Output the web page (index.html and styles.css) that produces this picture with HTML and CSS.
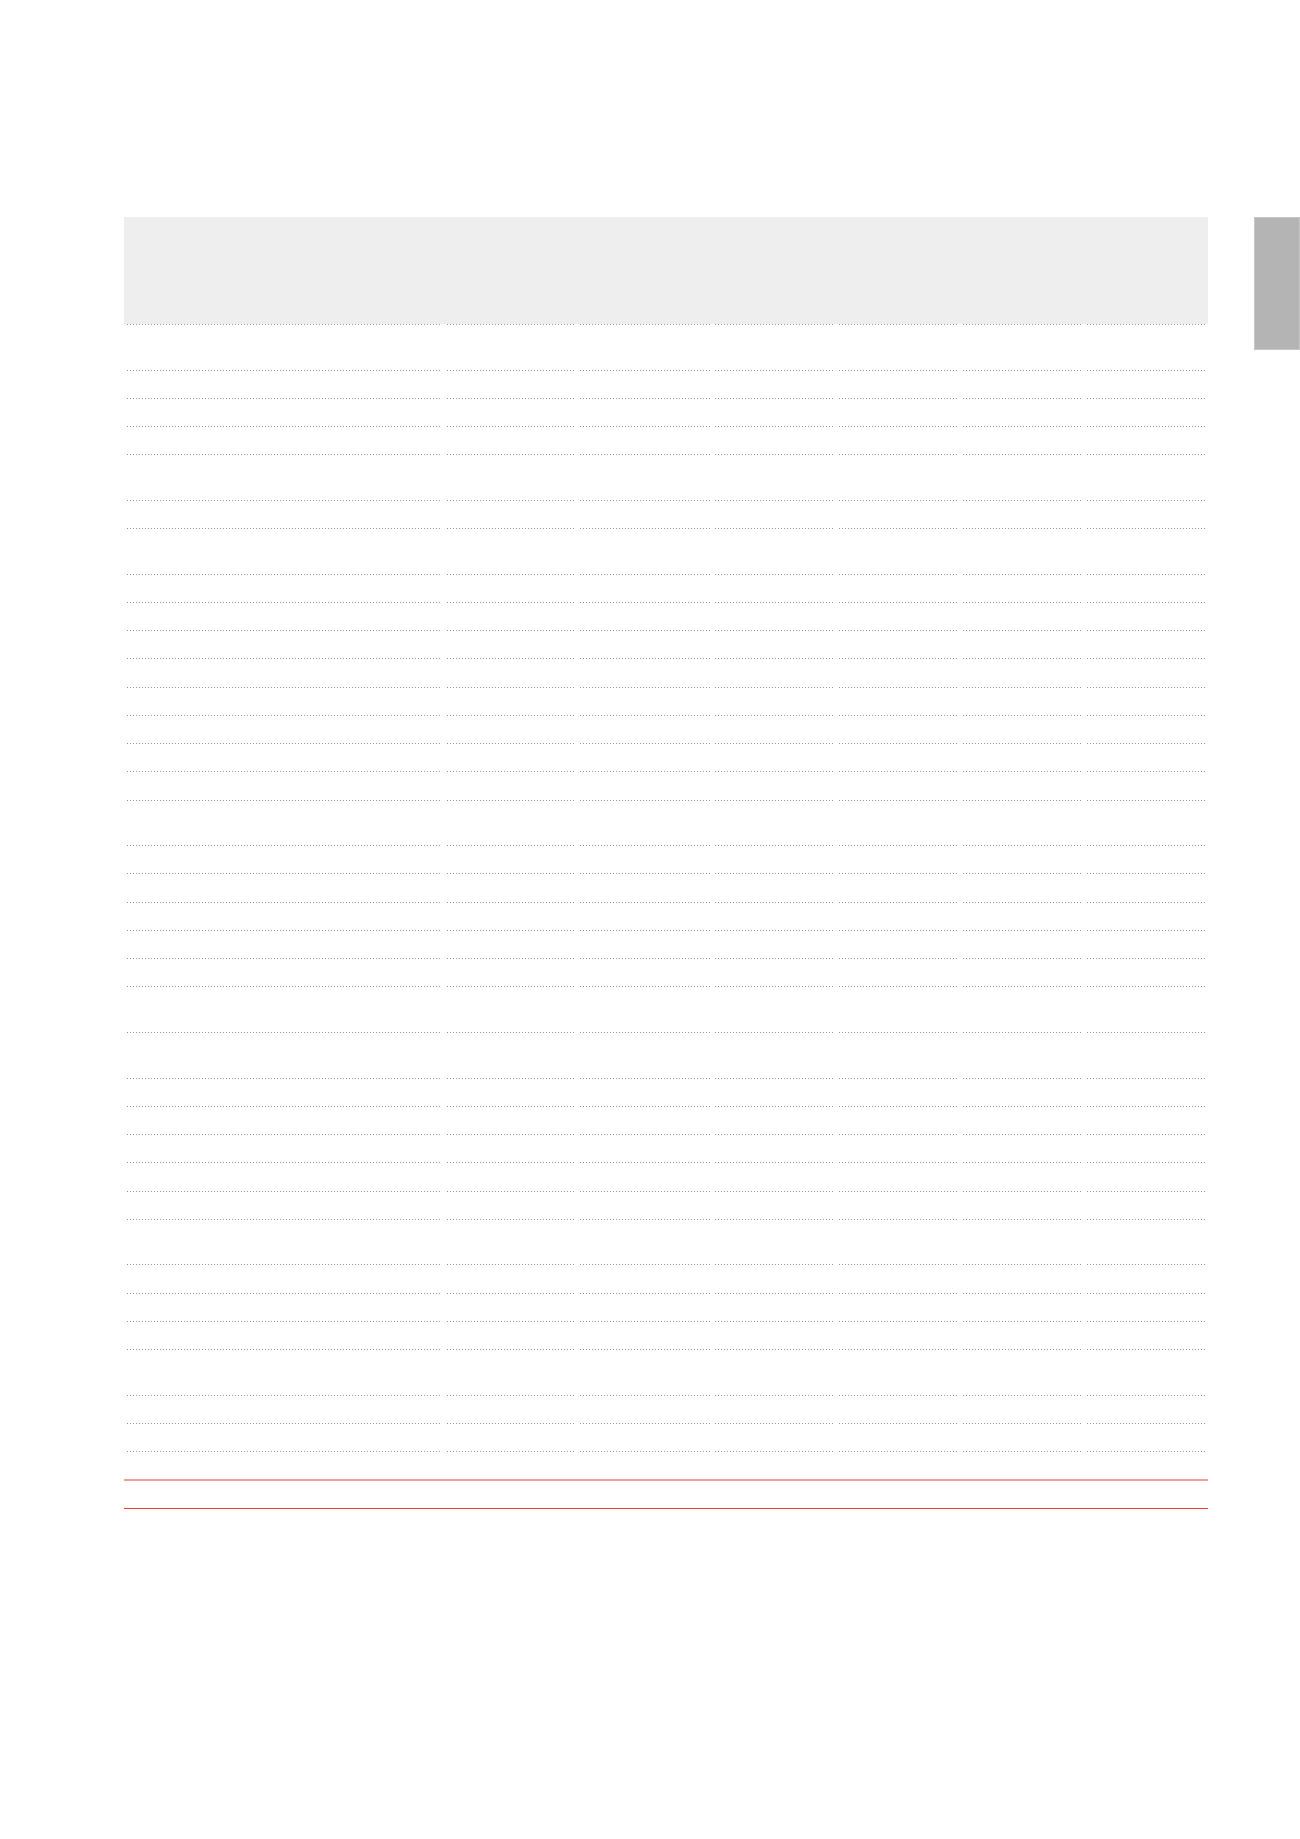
FILE: index.html
```html
<!DOCTYPE html>
<html lang="en">
<head>
<meta charset="utf-8">
<title>Sheet</title>
<link rel="stylesheet" href="styles.css">
</head>
<body>
<div class="page">
  <main class="sheet">
    <div class="head"></div>
    <div class="row rule"><i></i><i></i><i></i><i></i><i></i><i></i><i></i></div>

    <section class="group">
      <div class="row"><i></i><i></i><i></i><i></i><i></i><i></i><i></i></div>
      <div class="row"><i></i><i></i><i></i><i></i><i></i><i></i><i></i></div>
      <div class="row"><i></i><i></i><i></i><i></i><i></i><i></i><i></i></div>
      <div class="row"><i></i><i></i><i></i><i></i><i></i><i></i><i></i></div>
    </section>

    <section class="group">
      <div class="row"><i></i><i></i><i></i><i></i><i></i><i></i><i></i></div>
      <div class="row"><i></i><i></i><i></i><i></i><i></i><i></i><i></i></div>
    </section>

    <section class="group">
      <div class="row"><i></i><i></i><i></i><i></i><i></i><i></i><i></i></div>
      <div class="row"><i></i><i></i><i></i><i></i><i></i><i></i><i></i></div>
      <div class="row"><i></i><i></i><i></i><i></i><i></i><i></i><i></i></div>
      <div class="row"><i></i><i></i><i></i><i></i><i></i><i></i><i></i></div>
      <div class="row"><i></i><i></i><i></i><i></i><i></i><i></i><i></i></div>
      <div class="row"><i></i><i></i><i></i><i></i><i></i><i></i><i></i></div>
      <div class="row"><i></i><i></i><i></i><i></i><i></i><i></i><i></i></div>
      <div class="row"><i></i><i></i><i></i><i></i><i></i><i></i><i></i></div>
      <div class="row"><i></i><i></i><i></i><i></i><i></i><i></i><i></i></div>
    </section>

    <section class="group">
      <div class="row"><i></i><i></i><i></i><i></i><i></i><i></i><i></i></div>
      <div class="row"><i></i><i></i><i></i><i></i><i></i><i></i><i></i></div>
      <div class="row"><i></i><i></i><i></i><i></i><i></i><i></i><i></i></div>
      <div class="row"><i></i><i></i><i></i><i></i><i></i><i></i><i></i></div>
      <div class="row"><i></i><i></i><i></i><i></i><i></i><i></i><i></i></div>
      <div class="row"><i></i><i></i><i></i><i></i><i></i><i></i><i></i></div>
    </section>

    <section class="group">
      <div class="row"><i></i><i></i><i></i><i></i><i></i><i></i><i></i></div>
    </section>

    <section class="group">
      <div class="row"><i></i><i></i><i></i><i></i><i></i><i></i><i></i></div>
      <div class="row"><i></i><i></i><i></i><i></i><i></i><i></i><i></i></div>
      <div class="row"><i></i><i></i><i></i><i></i><i></i><i></i><i></i></div>
      <div class="row"><i></i><i></i><i></i><i></i><i></i><i></i><i></i></div>
      <div class="row"><i></i><i></i><i></i><i></i><i></i><i></i><i></i></div>
      <div class="row"><i></i><i></i><i></i><i></i><i></i><i></i><i></i></div>
    </section>

    <section class="group">
      <div class="row"><i></i><i></i><i></i><i></i><i></i><i></i><i></i></div>
      <div class="row"><i></i><i></i><i></i><i></i><i></i><i></i><i></i></div>
      <div class="row"><i></i><i></i><i></i><i></i><i></i><i></i><i></i></div>
      <div class="row"><i></i><i></i><i></i><i></i><i></i><i></i><i></i></div>
    </section>

    <section class="group">
      <div class="row"><i></i><i></i><i></i><i></i><i></i><i></i><i></i></div>
      <div class="row"><i></i><i></i><i></i><i></i><i></i><i></i><i></i></div>
      <div class="row"><i></i><i></i><i></i><i></i><i></i><i></i><i></i></div>
    </section>

    <div class="total total-light"></div>
    <div class="total total-dark"></div>
  </main>
  <aside class="tab"></aside>
</div>
</body>
</html>
```

FILE: styles.css
```css
html, body {
  margin: 0;
  padding: 0;
  background: #ffffff;
  font-family: "Liberation Sans", Arial, sans-serif;
}

.page {
  display: flex;
  align-items: flex-start;
  gap: 46px;
  padding: 217px 0 0 124px;
  width: 1300px;
  box-sizing: border-box;
}

.sheet {
  width: 1084px;
  flex-shrink: 0;
  display: flex;
  flex-direction: column;
}

.head {
  height: 107px;
  background: #eeeeee;
}

.row {
  display: grid;
  grid-template-columns: 320px 133px 135px 124px 124px 124px 124px;
  height: 28.25px;
}

.row.rule {
  height: 1px;
}

.row i {
  display: block;
  padding: 0 2px 0 3px;
  background-image: linear-gradient(to right, #989898 1px, transparent 1px);
  background-size: 3px 1px;
  background-repeat: repeat-x;
  background-position: left bottom;
  background-origin: content-box;
  background-clip: content-box;
}

.group {
  display: flex;
  flex-direction: column;
  padding-top: 17.3px;
}

.total {
  box-sizing: border-box;
}

.total-light {
  height: 29px;
  border-bottom: 2px solid #f59f99;
}

.total-dark {
  height: 28px;
  border-bottom: 1px solid #ee3b2b;
}

.tab {
  flex-shrink: 0;
  width: 46px;
  height: 133px;
  box-sizing: border-box;
  background: #b3b4b3;
  border: 1px solid #c6c7c6;
}
```
